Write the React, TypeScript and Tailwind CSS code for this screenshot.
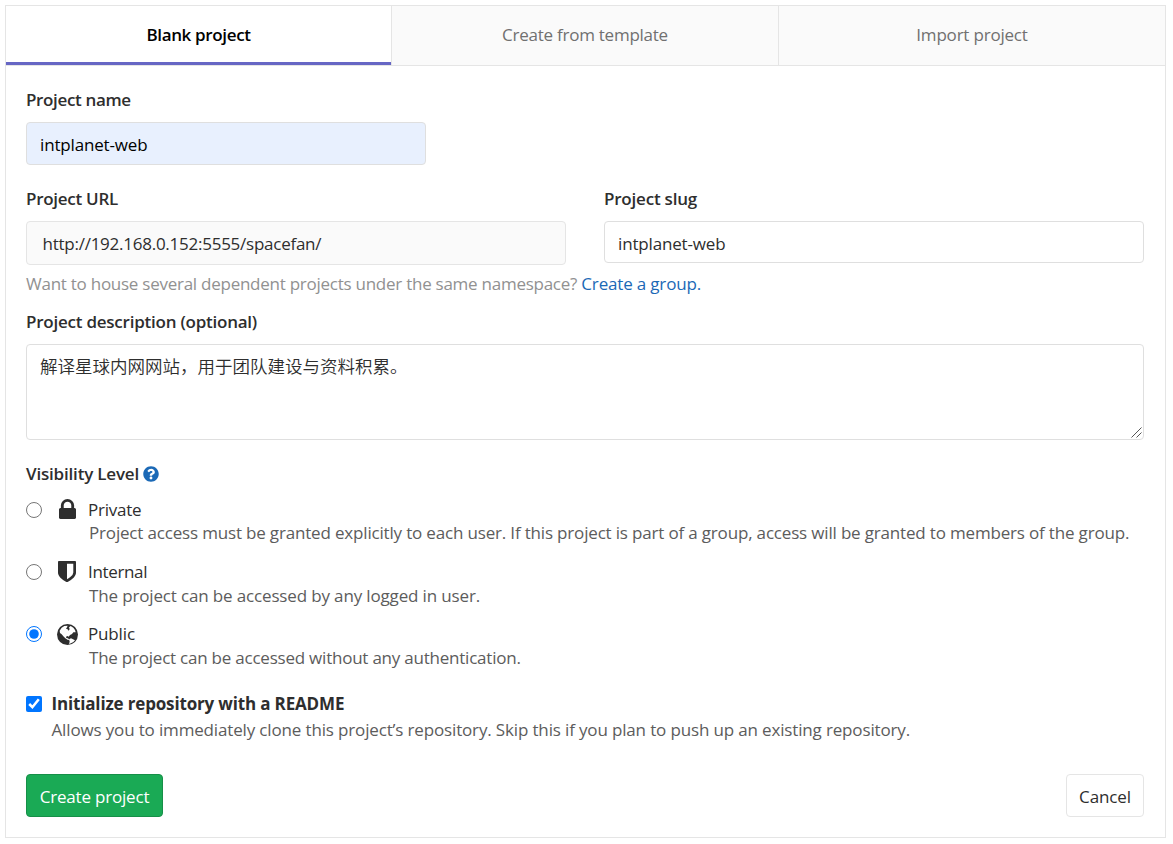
import type { ReactNode } from "react";
import { FaQuestionCircle } from "react-icons/fa";

function LockIcon() {
  return (
    <svg viewBox="0 128 1152 1408" className="mb-[3px] h-5 w-[17px]" preserveAspectRatio="none" fill="currentColor">
      <path d="M320 768h512v-192q0-106-75-181t-181-75-181 75-75 181v192zm832 96v576q0 40-28 68t-68 28h-960q-40 0-68-28t-28-68v-576q0-40 28-68t68-28h32v-192q0-184 132-316t316-132 316 132 132 316v192h32q40 0 68 28t28 68z" />
    </svg>
  );
}

function ShieldIcon() {
  return (
    <svg viewBox="256 128 1280 1536" className="mb-0.5 h-[21px] w-[18px]" preserveAspectRatio="none" fill="currentColor">
      <path d="M1344 960v-640h-448v1137q119-63 213-137 235-184 235-360zm192-768v768q0 86-33.5 170.5t-83 150-118 127.5-126.5 103-121 77.5-89.5 49.5-42.5 20q-12 6-26 6t-26-6q-16-7-42.5-20t-89.5-49.5-121-77.5-126.5-103-118-127.5-83-150-33.5-170.5v-768q0-26 19-45t45-19h1152q26 0 45 19t19 45z" />
    </svg>
  );
}

function GlobeIcon() {
  return (
    <svg viewBox="0 0 63 63" className="mt-px size-[21px]">
      <circle cx="31.5" cy="31.5" r="31.5" fill="currentColor" />
      <path
        fill="#fff"
        d="M8 20 L14 11 L22 6 L32 5 L30 10 L27 14 L32 16 L34 20 L38 16 L36 10 L41 6 L49 11 L54 18 L56 25 L49 25 L45 30 L39 33 L35 38 L32 36 L27 38 L28 42 L33 43 L37 47 L33 48 L25 43 L19 37 L14 31 L9 27 Z"
      />
      <path fill="#fff" d="M36 46 L42 43 L48 46 L54 49 L49 54 L42 58 L36 60 L38 53 Z" />
    </svg>
  );
}

type Tab = { label: string; spacing: string };

const tabs: Tab[] = [
  { label: "Create from template", spacing: "tracking-[-0.25px]" },
  { label: "Import project", spacing: "tracking-[-0.2px]" },
];

type Level = {
  name: string;
  nameSpacing: string;
  text: string;
  textSpacing: string;
  icon: ReactNode;
};

const levels: Level[] = [
  {
    name: "Private",
    nameSpacing: "tracking-[-0.25px]",
    text: "Project access must be granted explicitly to each user. If this project is part of a group, access will be granted to members of the group.",
    textSpacing: "-mt-px tracking-[-0.174px]",
    icon: <LockIcon />,
  },
  {
    name: "Internal",
    nameSpacing: "tracking-[-0.35px]",
    text: "The project can be accessed by any logged in user.",
    textSpacing: "tracking-[-0.15px]",
    icon: <ShieldIcon />,
  },
  {
    name: "Public",
    nameSpacing: "tracking-[-0.15px]",
    text: "The project can be accessed without any authentication.",
    textSpacing: "tracking-[-0.225px]",
    icon: <GlobeIcon />,
  },
];

export default function App() {
  return (
    <div className="h-[844px] w-[1173px] bg-white p-[5px] font-['Open_Sans','Noto_Sans_CJK_SC',sans-serif] text-[17px] leading-6 text-[#2e2e2e]">
      <div className="h-[833px] w-[1161px] border border-[#e5e5e5]">
        <div className="flex h-[60px] border-b border-[#e5e5e5]">
          <button className="w-[385px] border-b-3 border-[#6666c4] bg-white pt-px font-semibold tracking-[-0.35px] text-black">
            Blank project
          </button>
          {tabs.map((tab) => (
            <button
              key={tab.label}
              className={`flex-1 border-l border-[#e5e5e5] bg-[#fafafa] pb-0.5 text-[#707070] ${tab.spacing}`}
            >
              {tab.label}
            </button>
          ))}
        </div>

        <form className="flex flex-col pt-[22px] pr-[21px] pl-5">
          <label className="font-semibold tracking-[-0.35px]">Project name</label>
          <input
            className="mt-2.5 h-[43px] w-[400px] rounded border border-[#dfdfdf] bg-[#e8f0fe] px-[13px] pt-px tracking-[-0.16px] text-black"
            defaultValue="intplanet-web"
          />

          <div className="mt-[22px] flex gap-[38px]">
            <div className="flex w-[540px] flex-col">
              <label className="font-semibold tracking-[-0.27px]">Project URL</label>
              <div className="mt-2.5 flex h-11 items-center rounded border border-[#e5e5e5] bg-[#fafafa] px-[15.5px] pt-0.5 tracking-[-0.25px]">
                http://192.168.0.152:5555/spacefan/
              </div>
            </div>
            <div className="flex w-[540px] flex-col">
              <label className="font-semibold tracking-[-0.21px]">Project slug</label>
              <input
                className="mt-2.5 h-[42px] rounded border border-[#dfdfdf] px-[13px] pt-0.5 tracking-[-0.16px]"
                defaultValue="intplanet-web"
              />
            </div>
          </div>

          <p className="mt-[7px] text-[#919191]">
            <span className="tracking-[-0.255px]">
              Want to house several dependent projects under the same namespace?{" "}
            </span>
            <a className="tracking-[-0.17px] text-[#1b69b6]">Create a group.</a>
          </p>

          <label className="mt-3.5 font-semibold tracking-[-0.235px]">Project description (optional)</label>
          <div className="relative mt-2.5 h-24">
            <textarea
              className="block h-24 w-full resize-none rounded border border-[#dfdfdf] px-[13px] py-[9px] text-[17.5px] font-[350]"
              defaultValue="解译星球内网网站，用于团队建设与资料积累。"
            />
            <svg
              viewBox="0 0 11 11"
              className="absolute right-[2px] bottom-[2px] size-[11px]"
              stroke="#555"
              strokeWidth="1"
            >
              <path d="M0.5 10.5 L10.5 0.5 M5.5 10.5 L10.5 5.5" />
            </svg>
          </div>

          <div className="mt-[22px] flex items-center gap-1">
            <label className="font-semibold tracking-[-0.19px]">Visibility Level</label>
            <FaQuestionCircle className="mb-px size-4 text-[#1b69b6]" />
          </div>

          <div className="mt-3 flex flex-col gap-3.5">
            {levels.map((level) => (
              <div key={level.name} className="flex h-12">
                <input
                  type="radio"
                  name="visibility"
                  className="mt-1 size-4"
                  defaultChecked={level.name === "Public"}
                />
                <span className="ml-3.5 flex h-6 w-[22px] items-center justify-center">{level.icon}</span>
                <div className="ml-2.5 flex flex-col">
                  <span className={level.nameSpacing}>{level.name}</span>
                  <span className={`pl-px whitespace-nowrap text-[#5c5c5c] ${level.textSpacing}`}>
                    {level.text}
                  </span>
                </div>
              </div>
            ))}
          </div>

          <div className="mt-[22px] flex">
            <input type="checkbox" className="mt-1 size-4" defaultChecked />
            <div className="ml-[9px] flex flex-col gap-0.5">
              <label className="pl-[0.5px] font-bold tracking-[-0.16px]">Initialize repository with a README</label>
              <span className="pl-[0.5px] tracking-[-0.152px] text-[#5c5c5c]">
                Allows you to immediately clone this project’s repository. Skip this if you plan to push up an existing
                repository.
              </span>
            </div>
          </div>

          <div className="mt-8 flex justify-between">
            <button
              type="button"
              className="h-[43px] w-[137px] rounded border border-[#168f48] bg-[#1aaa55] pt-0.5 tracking-[-0.2px] text-white"
            >
              Create project
            </button>
            <button
              type="button"
              className="h-[43px] w-[78px] rounded border border-[#e5e5e5] bg-white pt-0.5 tracking-[-0.12px]"
            >
              Cancel
            </button>
          </div>
        </form>
      </div>
    </div>
  );
}
